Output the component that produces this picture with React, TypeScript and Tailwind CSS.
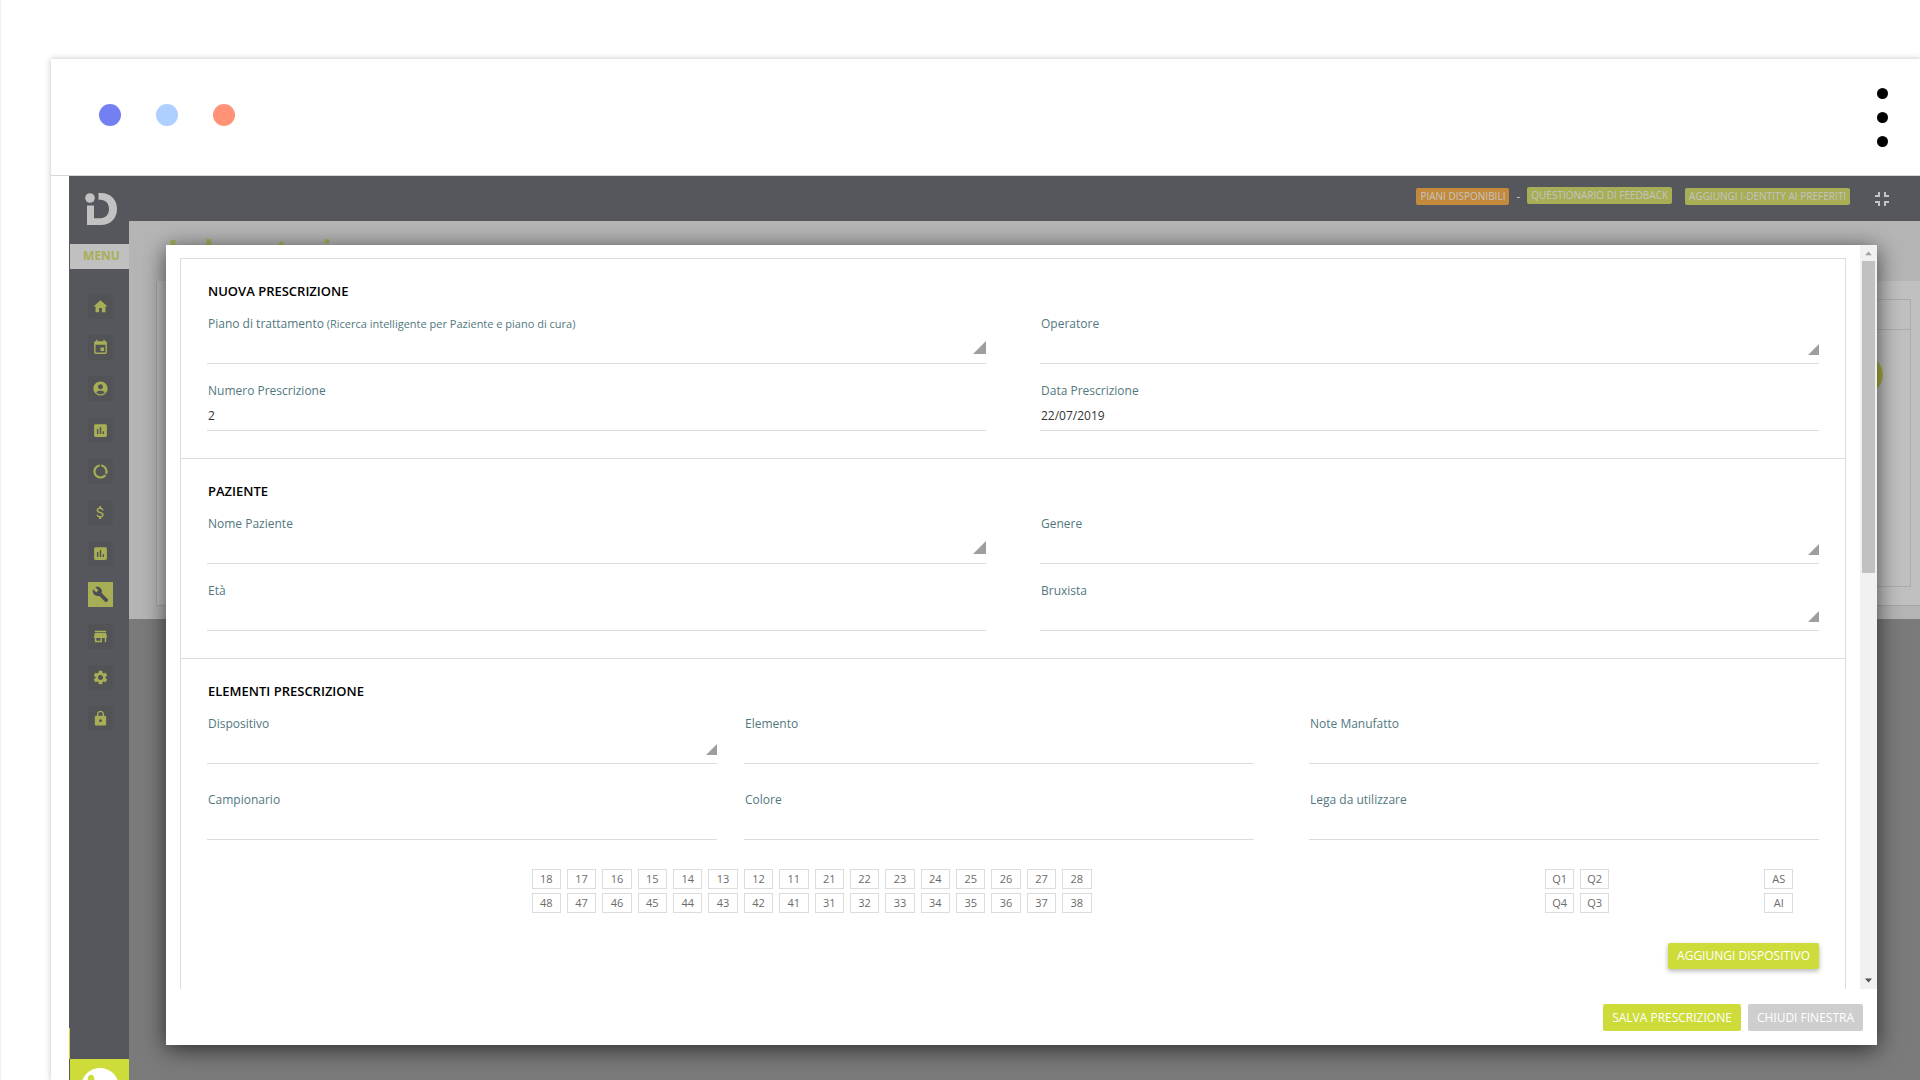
import React, { useId } from "react";
import {
  MdAccountCircle,
  MdAssessment,
  MdAttachMoney,
  MdBuild,
  MdDataUsage,
  MdEvent,
  MdFullscreenExit,
  MdHome,
  MdLock,
  MdSettings,
  MdStore,
} from "react-icons/md";

const menu = [
  { name: "Home", Icon: MdHome },
  { name: "Agenda", Icon: MdEvent },
  { name: "Pazienti", Icon: MdAccountCircle },
  { name: "Statistiche", Icon: MdAssessment },
  { name: "Consumi", Icon: MdDataUsage },
  { name: "Contabilità", Icon: MdAttachMoney },
  { name: "Report", Icon: MdAssessment },
  { name: "Laboratorio", Icon: MdBuild, active: true },
  { name: "Magazzino", Icon: MdStore },
  { name: "Impostazioni", Icon: MdSettings },
  { name: "Blocca", Icon: MdLock },
];

const upperTeeth = ["18", "17", "16", "15", "14", "13", "12", "11", "21", "22", "23", "24", "25", "26", "27", "28"];
const lowerTeeth = ["48", "47", "46", "45", "44", "43", "42", "41", "31", "32", "33", "34", "35", "36", "37", "38"];

type FieldProps = {
  label: string;
  hint?: string;
  value?: string;
  select?: boolean;
  large?: boolean;
  className?: string;
};

function Field({ label, hint, value = "", select, large, className = "" }: FieldProps) {
  const id = useId();
  return (
    <div className={`relative flex h-[50px] min-w-0 flex-1 flex-col border-b border-[#dcdcdc] ${className}`}>
      <label htmlFor={id} className="pl-px text-xs font-medium leading-5 text-[#527780]">
        {label}
        {hint && <span className="text-[11px]"> {hint}</span>}
      </label>
      {select ? (
        <>
          <select
            id={id}
            defaultValue=""
            className="w-full flex-1 appearance-none bg-transparent pl-px text-xs text-[#333] outline-none"
          >
            <option value=""></option>
          </select>
          <svg
            viewBox="0 0 12 12"
            className={`pointer-events-none absolute right-0 ${large ? "bottom-[9px] size-[13px]" : "bottom-2 size-[11px]"}`}
          >
            <path d="M12 0v12H0z" fill="#9e9e9e" />
          </svg>
        </>
      ) : (
        <input
          id={id}
          defaultValue={value}
          className="h-7 w-full bg-transparent pl-px text-xs text-[#333] outline-none"
        />
      )}
    </div>
  );
}

function Section({ title, children }: { title: string; children: React.ReactNode }) {
  return (
    <section className="border-b border-[#dcdcdc] px-[26px] pt-[22px] pb-[27px]">
      <h2 className="mb-[13px] pl-px text-[13px] font-semibold leading-5 text-black">{title}</h2>
      {children}
    </section>
  );
}

const tagClass = "h-5 border border-[#dcdcdc] bg-white text-[11px] leading-[18px] text-[#6b6b6b]";

function TeethRow({ items }: { items: string[] }) {
  return (
    <div className="mx-auto grid w-[560px] grid-cols-16 gap-[6px]">
      {items.map((t) => (
        <button key={t} type="button" className={tagClass}>
          {t}
        </button>
      ))}
    </div>
  );
}

function Tags({ items }: { items: string[] }) {
  return (
    <div className="flex justify-center gap-[6px]">
      {items.map((t) => (
        <button key={t} type="button" className={`w-[29px] ${tagClass}`}>
          {t}
        </button>
      ))}
    </div>
  );
}

function Logo() {
  return (
    <svg viewBox="0 0 32 32" className="size-8" fill="#c2c2c2" role="img" aria-label="i-Dentity">
      <circle cx="5" cy="5" r="4.8" />
      <path d="M2 12.500h7v12.800h6.500c5 0 8.500-3.800 8.500-9.300s-3.500-9.200-8.500-9.200H13.500V0h2.500C25.500 0 32 6.500 32 16s-6.500 16-16 16H2z" />
    </svg>
  );
}

function Sidebar() {
  return (
    <nav className="flex w-[60px] shrink-0 flex-col items-center bg-[#56575c]">
      <div className="flex h-[68px] items-center pb-[3px] pl-1">
        <Logo />
      </div>
      <div className="ml-px h-[25px] self-stretch bg-[#c0c0c0] pl-1 text-center text-xs font-bold leading-[23px] text-[#a9af55]">
        MENU
      </div>
      <ul className="mt-[25px] flex h-[437px] flex-col justify-between pl-[3px]">
        {menu.map(({ name, Icon, active }) => (
          <li key={name}>
            <a
              href="#"
              aria-label={name}
              className={`flex size-[25px] items-center justify-center ${
                active ? "bg-[#a8ae55] text-[#4d4e53]" : "bg-[#525357] text-[#a8ae55]"
              }`}
            >
              <Icon size={17} />
            </a>
          </li>
        ))}
      </ul>
      <div className="mt-auto h-[31px] w-px self-start bg-[#cddc39]" />
      <button type="button" aria-label="Assistenza" className="ml-px h-[21px] self-stretch overflow-hidden bg-[#cddc39]">
        <svg viewBox="0 0 60 60" className="size-[60px]">
          <circle cx="30" cy="28" r="19" fill="#fff" />
          <path d="M18 18c2-3 5-3 6 0l1 6-3 2c2 5 6 9 11 11l3-3 6 3c2 2 0 6-4 6-11 0-22-13-20-25z" fill="#cddc39" />
        </svg>
      </button>
    </nav>
  );
}

function Header() {
  return (
    <header className="flex h-[45px] shrink-0 items-center justify-end bg-[#56575c] pr-[26px] pb-1 text-[10px] leading-[17px] text-[#c4c4c4]">
      <a href="#" className="rounded-[2px] bg-[#c48a3c] px-1">
        PIANI DISPONIBILI
      </a>
      <span className="mx-[7px] text-xs">-</span>
      <a href="#" className="mb-[3px] rounded-[2px] bg-[#a8ae55] px-1">
        QUESTIONARIO DI FEEDBACK
      </a>
      <a href="#" className="ml-[13px] rounded-[2px] bg-[#a8ae55] px-1">
        AGGIUNGI I-DENTITY AI PREFERITI
      </a>
      <button type="button" aria-label="Esci da schermo intero" className="ml-5 pt-[5px]">
        <MdFullscreenExit size={24} />
      </button>
    </header>
  );
}

function Laboratory() {
  return (
    <main className="h-[398px] bg-[#b5b5b5] pt-3">
      <h1 className="ml-[39px] h-12 text-[31px] font-bold leading-[34px] text-[#a9af55]">Laboratorio</h1>
      <div className="ml-[27px] h-[325px] border-b border-l border-[#a6a6a6] bg-[#c0c0c0] pt-[18px] pr-[9px] pl-4">
        <div className="h-[288px] border border-[#acacac]">
          <div className="h-[30px] border-b border-[#acacac]" />
          <div className="mt-[26px] mr-[27px] ml-auto size-[38px] rounded-full bg-[#a8ae45]" />
        </div>
      </div>
    </main>
  );
}

function Scrollbar() {
  return (
    <div className="flex w-[17px] shrink-0 flex-col items-center bg-[#f1f1f1]">
      <svg viewBox="0 0 17 17" className="h-4 w-[17px]">
        <path d="M5 11l3.500-4L12 11z" fill="#a0a0a0" />
      </svg>
      <div className="h-[312px] w-[13px] bg-[#c1c1c1]" />
      <svg viewBox="0 0 17 17" className="mt-auto size-[17px]">
        <path d="M5 6.500l3.500 4 3.500-4z" fill="#505050" />
      </svg>
    </div>
  );
}

function PrescriptionDialog() {
  return (
    <div
      role="dialog"
      aria-label="Nuova prescrizione"
      className="absolute top-[69px] right-[43px] bottom-[35px] left-[97px] flex flex-col bg-white shadow-[0_4px_22px_rgba(0,0,0,0.65)]"
    >
      <div className="flex min-h-0 flex-1">
        <div className="min-w-0 flex-1 overflow-hidden pt-[13px] pr-[14px] pl-[14px]">
          <form className="min-h-full border border-b-0 border-[#dcdcdc]">
            <Section title="NUOVA PRESCRIZIONE">
              <div className="flex gap-[54px]">
                <Field
                  label="Piano di trattamento"
                  hint="(Ricerca intelligente per Paziente e piano di cura)"
                  select
                  large
                />
                <Field label="Operatore" select />
              </div>
              <div className="mt-[17px] flex gap-[54px]">
                <Field label="Numero Prescrizione" value="2" />
                <Field label="Data Prescrizione" value="22/07/2019" />
              </div>
            </Section>
            <Section title="PAZIENTE">
              <div className="flex gap-[54px]">
                <Field label="Nome Paziente" select large />
                <Field label="Genere" select />
              </div>
              <div className="mt-[17px] flex gap-[54px]">
                <Field label="Età" />
                <Field label="Bruxista" select />
              </div>
            </Section>
            <Section title="ELEMENTI PRESCRIZIONE">
              <div className="flex">
                <Field label="Dispositivo" select />
                <Field label="Elemento" className="ml-[27px]" />
                <Field label="Note Manufatto" className="ml-[55px]" />
              </div>
              <div className="mt-[26px] flex">
                <Field label="Campionario" />
                <Field label="Colore" className="ml-[27px]" />
                <Field label="Lega da utilizzare" className="ml-[55px]" />
              </div>
              <div className="mt-[29px] flex">
                <div className="flex w-3/4 flex-col gap-1">
                  <TeethRow items={upperTeeth} />
                  <TeethRow items={lowerTeeth} />
                </div>
                <div className="flex w-1/5 flex-col gap-1">
                  <Tags items={["Q1", "Q2"]} />
                  <Tags items={["Q4", "Q3"]} />
                </div>
                <div className="flex w-1/20 flex-col gap-1">
                  <Tags items={["AS"]} />
                  <Tags items={["AI"]} />
                </div>
              </div>
              <div className="mt-[30px] flex justify-end">
                <button
                  type="button"
                  className="h-[26px] rounded-[2px] bg-[#cddc39] px-[9px] text-xs text-white shadow-[0_2px_5px_rgba(0,0,0,0.3)]"
                >
                  AGGIUNGI DISPOSITIVO
                </button>
              </div>
            </Section>
          </form>
        </div>
        <Scrollbar />
      </div>
      <div className="flex h-14 shrink-0 items-start justify-end gap-[7px] pt-[15px] pr-[14px] text-xs text-white">
        <button type="button" className="h-[27px] rounded-[2px] bg-[#cddc39] px-[9px]">
          SALVA PRESCRIZIONE
        </button>
        <button type="button" className="h-[27px] rounded-[2px] bg-[#cecece] px-[9px]">
          CHIUDI FINESTRA
        </button>
      </div>
    </div>
  );
}

export default function App() {
  return (
    <div className="flex h-screen flex-col overflow-hidden border-l border-[#f0f0f0] bg-white pt-[59px] pl-[50px] font-['Open_Sans','Noto_Sans',sans-serif]">
      <div className="flex min-h-0 flex-1 flex-col bg-white shadow-[0_0_6px_rgba(0,0,0,0.25)]">
        <div className="flex h-[117px] shrink-0 items-center justify-between border-b border-[#d5d5d5] pr-8 pl-12">
          <div className="flex gap-[35px] pb-1">
            <span className="size-[22px] rounded-full bg-[#7480f2]" />
            <span className="size-[22px] rounded-full bg-[#aecfff]" />
            <span className="size-[22px] rounded-full bg-[#ff9277]" />
          </div>
          <button type="button" aria-label="Altre opzioni" className="flex flex-col gap-[13px]">
            <span className="size-[11px] rounded-full bg-black" />
            <span className="size-[11px] rounded-full bg-black" />
            <span className="size-[11px] rounded-full bg-black" />
          </button>
        </div>
        <div className="relative ml-[18px] flex min-h-0 flex-1">
          <Sidebar />
          <div className="flex min-w-0 flex-1 flex-col bg-[#7b7b7b]">
            <Header />
            <Laboratory />
          </div>
          <PrescriptionDialog />
        </div>
      </div>
    </div>
  );
}
